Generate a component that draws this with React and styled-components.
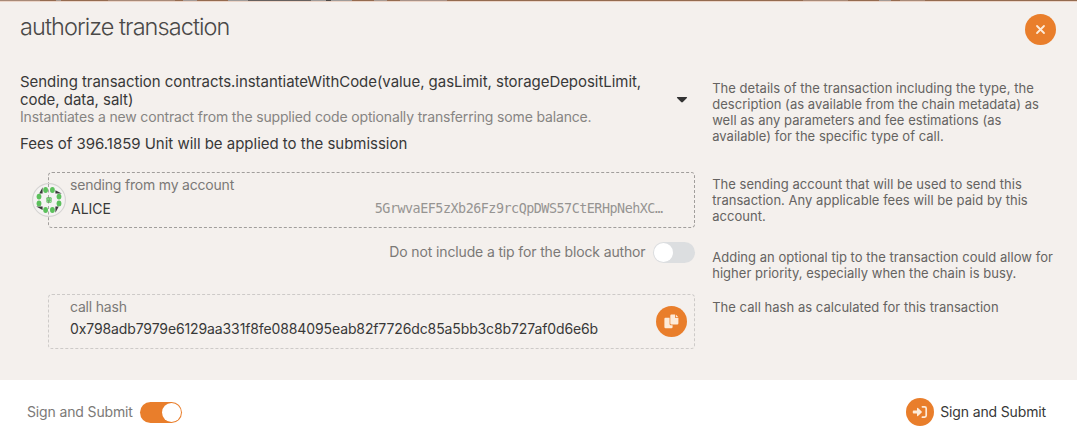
import React from "react";
import styled, { createGlobalStyle } from "styled-components";

const Global = createGlobalStyle`
  * { box-sizing: border-box; }
  body { margin: 0; background: #fff; font-family: Inter, "Liberation Sans", sans-serif; }
`;

const orange = "#e97e2b";

const Modal = styled.div`
  width: 1077px;
  height: 443px;
  display: flex;
  flex-direction: column;
  background: #f4f0ed;
  overflow: hidden;
  color: #383838;
`;

/* sliver of the page's menu bar that shows above the dialog */
const Backdrop = styled.div`
  height: 1px;
  flex: none;
  background: linear-gradient(
    90deg,
    #a88a78 0 40px, #946b50 40px 56px, #a89a92 56px 61px, #946b50 61px 108px,
    #a88a78 108px 175px, #946b50 175px 183px, #a39a96 183px 197px, #946b50 197px 202px,
    #946b50 202px 228px, #a09c9a 228px 248px, #66605e 248px 311px, #a09c9a 311px 326px,
    #4d4846 326px 331px, #a09c9a 331px 352px, #946b50 352px 374px, #a89a92 374px 387px,
    #946b50 387px 400px, #a89288 400px 447px, #946b50 447px 803px, #a88a78 803px 848px,
    #946b50 848px 879px, #a39a96 879px 891px, #946b50 891px 900px, #a88a78 900px 925px,
    #946b50 925px
  );
`;

const TopEdge = styled.div`
  height: 1px;
  flex: none;
  background: #ecd5c8;
`;

const Header = styled.header`
  height: 71px;
  flex: none;
  display: flex;
  justify-content: space-between;
  align-items: flex-start;
  padding: 12px 20.6px 0 20px;
`;

const Title = styled.h1`
  margin: -1px 0 0;
  font-size: 23.5px;
  font-weight: 300;
  line-height: 28px;
  letter-spacing: -0.93px;
  color: #4a4948;
  white-space: nowrap;
`;

const RoundButton = styled.button`
  width: ${(p) => p.$size}px;
  height: ${(p) => p.$size}px;
  flex: none;
  padding: 0;
  border: 0;
  border-radius: 50%;
  background: ${orange};
  display: flex;
  align-items: center;
  justify-content: center;
`;

const Body = styled.main`
  height: 307px;
  flex: none;
  padding: 0 20px;
`;

const Row = styled.section`
  display: grid;
  grid-template-columns: 674.5px 1fr;
  column-gap: 17.7px;
  height: ${(p) => p.$h}px;
`;

const Line = styled.span`
  display: block;
  width: max-content;
  white-space: pre;
`;

const Summary = styled.div`
  display: flex;
  justify-content: space-between;
  padding-right: 6.5px;
`;

const Heading = styled.div`
  font-size: 15px;
  line-height: 18px;
  letter-spacing: -0.045px;
`;

const Desc = styled.div`
  font-size: 14px;
  line-height: 16px;
  letter-spacing: -0.158px;
  color: #868482;
`;

const Fees = styled(Heading)`
  margin-top: 10px;
  letter-spacing: -0.02px;
`;

const Caret = styled.svg`
  flex: none;
  margin-top: 23px;
`;

const Help = styled.div`
  padding-top: ${(p) => p.$top}px;
  font-size: 13px;
  line-height: 16px;
  letter-spacing: 0.03px;
  color: #656361;
`;

const Box = styled.div`
  margin-left: 28px;
  height: ${(p) => p.$h}px;
  border: 1px dashed ${(p) => p.$border};
  border-radius: 4px;
  display: flex;
  align-items: flex-start;
`;

const Avatar = styled.svg`
  flex: none;
  margin: 10px 3px 0 -17px;
`;

const Fields = styled.div`
  flex: 1;
  padding: ${(p) => p.$pad};
`;

const Label = styled.div`
  font-size: 14px;
  line-height: 20px;
  letter-spacing: -0.2px;
  color: #7b7977;
  white-space: nowrap;
`;

const Account = styled.div`
  display: flex;
  justify-content: space-between;
  align-items: center;
  height: 26px;
  padding: 0 31px 0 1px;
  font-size: 14px;
`;

const Address = styled.span`
  font-family: "DejaVu Sans Mono", monospace;
  font-size: 13.4px;
  letter-spacing: -0.49px;
  color: #969492;
`;

const Hash = styled.div`
  font-size: 14px;
  line-height: 24px;
  letter-spacing: -0.115px;
`;

const CopySlot = styled.div`
  padding: 11px 7px 0 0;
`;

const Tip = styled.div`
  display: flex;
  justify-content: flex-end;
  align-items: center;
  gap: 7px;
  height: 22px;
`;

const TipLabel = styled(Label)`
  letter-spacing: -0.14px;
`;

const Toggle = styled.span`
  width: 42px;
  height: 21px;
  flex: none;
  padding: 1px;
  border-radius: 11px;
  display: flex;
  justify-content: ${(p) => (p.$on ? "flex-end" : "flex-start")};
  background: ${(p) => (p.$on ? orange : "#dcdee0")};
`;

const Knob = styled.span`
  width: 19px;
  height: 19px;
  border-radius: 50%;
  background: #fff;
`;

const Footer = styled.footer`
  flex: 1;
  background: #fff;
  display: flex;
  justify-content: space-between;
  align-items: center;
  padding: 1px 31px 0 27px;
`;

const FooterGroup = styled.div`
  display: flex;
  align-items: center;
  gap: ${(p) => p.$gap}px;
`;

const FooterText = styled(Label)`
  letter-spacing: -0.14px;
  color: ${(p) => (p.$dark ? "#383838" : "#7b7977")};
`;

const helpTexts = [
  [
    "The details of the transaction including the type, the",
    "description (as available from the chain metadata) as",
    "well as any parameters and fee estimations (as",
    "available) for the specific type of call.",
  ],
  [
    "The sending account that will be used to send this",
    "transaction. Any applicable fees will be paid by this",
    "account.",
  ],
  [
    "Adding an optional tip to the transaction could allow for",
    "higher priority, especially when the chain is busy.",
  ],
  ["The call hash as calculated for this transaction"],
];

const HelpText = ({ lines, top }) => (
  <Help $top={top}>
    {lines.map((l) => (
      <Line key={l}>{l}</Line>
    ))}
  </Help>
);

const dots = [
  [13.6, 7], [20.4, 7], [13.6, 27], [20.4, 27],
  [7, 13.6], [7, 20.4], [27, 13.6], [27, 20.4],
];

const Identicon = () => (
  <Avatar width="34" height="34" viewBox="0 0 34 34">
    <circle cx="17" cy="17" r="16.4" fill="#f5f3f2" stroke="#d6d4d3" strokeWidth="1.1" />
    <path d="M10.6 4.3V10.4H7.2ZM23.4 7.2L29.8 10.6H23.4ZM23.4 23.6H26.8L23.4 29.8ZM4.2 23.6H10.6V26.9Z" fill="#3b3b3b" />
    {dots.map(([x, y]) => (
      <ellipse key={`${x}-${y}`} cx={x} cy={y} rx="2.4" ry="2.9" fill="#5cc05c" />
    ))}
    <rect x="14.4" y="14.2" width="5.2" height="5.6" rx="1" fill="#5cc05c" />
    <path d="M15.6 15.6h.9v.9h-.9zM17.8 15.6h.9v.9h-.9zM15.6 17.8h.9v.9h-.9zM17.8 17.8h.9v.9h-.9z" fill="#e9f5e7" />
    <path d="M16.5 1v33" stroke="#6e6b69" strokeOpacity=".55" strokeDasharray="3 2.5" />
  </Avatar>
);

export default function App() {
  return (
    <>
      <Global />
      <Modal>
        <Backdrop />
        <TopEdge />
        <Header>
          <Title>authorize transaction</Title>
          <RoundButton $size={31} aria-label="Close">
            <svg width="11" height="11" viewBox="0 0 11 11">
              <path d="M2 2L9 9M9 2L2 9" stroke="#fdebd9" strokeWidth="1.8" strokeLinecap="round" />
            </svg>
          </RoundButton>
        </Header>
        <Body>
          <Row $h={99}>
            <Summary>
              <div>
                <Heading>
                  <Line>Sending transaction contracts.instantiateWithCode(value, gasLimit, storageDepositLimit,</Line>
                  <Line>code, data, salt)</Line>
                </Heading>
                <Desc>
                  <Line>Instantiates a new contract from the supplied code optionally transferring some balance.</Line>
                </Desc>
                <Fees>
                  <Line>Fees of 396.1859 Unit will be applied to the submission</Line>
                </Fees>
              </div>
              <Caret width="12" height="8" viewBox="0 0 12 8">
                <path d="M1.6 1H10.4Q11.6 1.1 10.9 2L6.9 6.1Q6 6.8 5.1 6.1L1.1 2Q.4 1.1 1.6 1Z" fill="#333" />
              </Caret>
            </Summary>
            <HelpText top={7} lines={helpTexts[0]} />
          </Row>
          <Row $h={69}>
            <Box $h={56} $border="#a19e9c">
              <Identicon />
              <Fields $pad="2px 0 0 1px">
                <Label>sending from my account</Label>
                <Account>
                  ALICE
                  <Address>5GrwvaEF5zXb26Fz9rcQpDWS57CtERHpNehXC…</Address>
                </Account>
              </Fields>
            </Box>
            <HelpText top={4} lines={helpTexts[1]} />
          </Row>
          <Row $h={53}>
            <Tip>
              <TipLabel>Do not include a tip for the block author</TipLabel>
              <Toggle>
                <Knob />
              </Toggle>
            </Tip>
            <HelpText top={8} lines={helpTexts[2]} />
          </Row>
          <Row $h={55}>
            <Box $h={55} $border="#cdcac8">
              <Fields $pad="2px 0 0 21px">
                <Label>call hash</Label>
                <Hash>0x798adb7979e6129aa331f8fe0884095eab82f7726dc85a5bb3c8b727af0d6e6b</Hash>
              </Fields>
              <CopySlot>
                <RoundButton $size={31} aria-label="Copy">
                  <svg width="15" height="15" viewBox="0 0 15 15" fill="#fdebd9">
                    <path d="M1.4 3.8H5.6V10Q5.6 11.2 6.8 11.2H8.6V13Q8.6 14.2 7.4 14.2H1.6Q.4 14.2 .4 13V4.8Q.4 3.8 1.4 3.8Z" />
                    <path d="M7.4 .6H11V3.2Q11 4 11.8 4H14.4V9.2Q14.4 10.4 13.2 10.4H7.4Q6.3 10.4 6.3 9.2V1.8Q6.3 .6 7.4 .6Z" />
                    <path d="M11.8 .6L14.4 3.2H11.8Z" />
                  </svg>
                </RoundButton>
              </CopySlot>
            </Box>
            <HelpText top={5} lines={helpTexts[3]} />
          </Row>
        </Body>
        <Footer>
          <FooterGroup $gap={7}>
            <FooterText>Sign and Submit</FooterText>
            <Toggle $on>
              <Knob />
            </Toggle>
          </FooterGroup>
          <FooterGroup $gap={6}>
            <RoundButton $size={28} aria-label="Sign">
              <svg width="16" height="14" viewBox="0 0 16 14">
                <path d="M1.6 5.5H5V3.4Q5.1 2.3 6 3L9.7 6.5Q10.1 7 9.7 7.5L6 11Q5.1 11.7 5 10.6V8.5H1.6Q.8 8.5 .8 7.8V6.2Q.8 5.5 1.6 5.5Z" fill="#fdebd9" />
                <path d="M10.4 1.8H12.6Q14.2 1.8 14.2 3.4V10.6Q14.2 12.2 12.6 12.2H10.4" fill="none" stroke="#fdebd9" strokeWidth="1.7" strokeLinecap="round" />
              </svg>
            </RoundButton>
            <FooterText $dark>Sign and Submit</FooterText>
          </FooterGroup>
        </Footer>
      </Modal>
    </>
  );
}
